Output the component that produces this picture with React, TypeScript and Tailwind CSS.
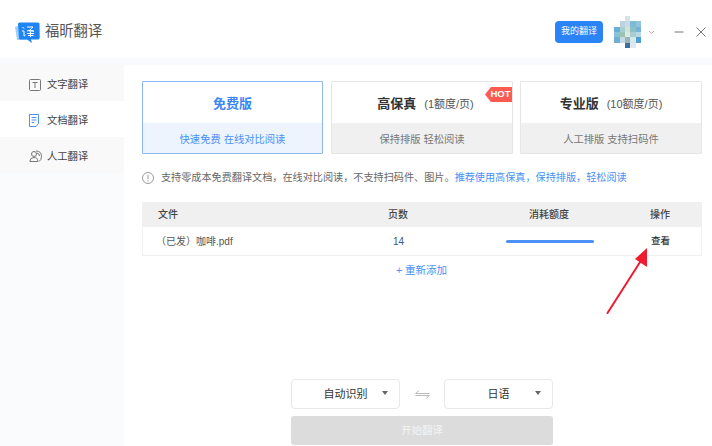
import React from 'react';

const FONT = "font-['Liberation_Sans','Noto_Sans_CJK_SC',sans-serif]";

// Mosaic avatar cells: [x, y, colour]
const avatarCells: [number, number, string][] = [
  [2, 0, '#d5e3ea'], [1, 1, '#bcd3df'], [2, 1, '#c9dbe2'], [3, 1, '#7fb9d8'], [4, 1, '#8fc4dc'],
  [0, 2, '#66b0d8'], [1, 2, '#a8cfc9'], [2, 2, '#cfe3dc'], [3, 2, '#8fbfc4'], [4, 2, '#74b4d8'],
  [0, 3, '#8cc0d8'], [1, 3, '#9cc4b4'], [2, 3, '#dfe8e0'], [3, 3, '#a7cdd0'], [4, 3, '#b8d8e8'],
  [0, 4, '#72b0d2'], [1, 4, '#c4dbe4'], [2, 4, '#9ab4bc'], [3, 4, '#d8e8f0'], [4, 4, '#4f9fd0'],
  [2, 5, '#3f6f9c'], [3, 5, '#dfe8f0'],
];

function Logo() {
  return (
    <svg width="28" height="28" viewBox="0 0 28 28" className="shrink-0">
      <path d="M0 9 L12 5 L24 5 L25 20 L8 22 L2 22 Z" fill="#9fd0fb" />
      <path d="M3 6 Q3 4.500 4.500 4.500 L23 4.500 Q24.500 4.500 24.500 6 L24.500 20 Q24.500 21.500 23 21.500 L16 21.500 L17 25 L12 21.500 L5.500 21.500 Q4 21.500 4 20 Z" fill="#1f84f5" />
      <path d="M7.500 9 L9 10.500 M7 13 L9 13 L9 18 L10.500 17 M12 9 L18 9 L14 13 L19 13 M12 13 Q15 11 19 13.500 M12 15.500 L19 15.500 M15.500 13.500 L15.500 19 M13 17.500 L18.500 17.500" stroke="#fff" strokeWidth="1" fill="none" />
    </svg>
  );
}

function TextIcon() {
  return (
    <svg width="12" height="12" viewBox="0 0 12 12" fill="none" stroke="#777" strokeWidth="1">
      <rect x="0.500" y="0.500" width="11" height="11" rx="1" />
      <path d="M3.500 3.500 H8.500 M6 3.500 V9" />
    </svg>
  );
}

function DocIcon() {
  return (
    <svg width="10" height="13" viewBox="0 0 10 13" fill="none" stroke="#4a90f5" strokeWidth="1">
      <path d="M0.500 0.500 H9.500 V9.500 L7 12.500 H0.500 Z" />
      <path d="M2.500 3.500 H7.500 M2.500 6 H7.500 M2.500 8.500 H5" />
    </svg>
  );
}

function PersonIcon() {
  return (
    <svg width="13" height="13" viewBox="0 0 13 13" fill="none" stroke="#777" strokeWidth="1">
      <circle cx="5" cy="4" r="2.500" />
      <path d="M0.800 11.500 Q1 7.500 5 7.500 Q9 7.500 8.800 11.500 Z" />
      <path d="M7 1 Q12.500 1 12.500 6.500 Q12.500 10 10 11.500 M8 3 Q10.500 3.500 10.500 6" />
    </svg>
  );
}

function NavItem({ icon, label, active }: { icon: React.ReactNode; label: string; active?: boolean }) {
  return (
    <div className={`h-9 flex items-center pl-[29px] pt-[3px] ${active ? 'bg-white' : 'bg-[#f9f9f9]'}`}>
      <span className="w-[18px] flex items-center">{icon}</span>
      <span className="text-[10.3px] text-[#444]">{label}</span>
    </div>
  );
}

function PlanCard({ title, rate, sub, active, hot, className }: { title: string; rate?: string; sub: string; active?: boolean; hot?: boolean; className: string }) {
  return (
    <div className={`relative h-[73px] flex flex-col border rounded-[1px] ${active ? 'border-[#8db8f5]' : 'border-[#e6e6e6]'} ${className}`}>
      <div className={`flex-1 flex items-center justify-center gap-[8px] pt-[3px] ${hot ? 'pl-[7px]' : ''}`}>
        <span className={`text-[13px] font-bold ${active ? 'text-[#3b86f5]' : 'text-[#333]'}`}>{title}</span>
        {rate && <span className="text-[11px] text-[#555]">{rate}</span>}
      </div>
      <div className={`h-[30px] flex items-center justify-center pt-[3px] text-[10.3px] ${active ? 'bg-[#edf4fe] text-[#4a90f5]' : 'bg-[#f0f0f0] text-[#777]'}`}>
        {sub}
      </div>
      {hot && (
        <div className="absolute right-0 top-[5px] h-[15px] w-[27px] bg-[#ff5a52] flex items-center justify-center text-[9.5px] font-bold text-white [clip-path:polygon(22%_0,100%_0,100%_100%,22%_100%,0_50%)] pl-[4px]">
          HOT
        </div>
      )}
    </div>
  );
}

function LangSelect({ label }: { label: string }) {
  return (
    <div className="w-[109px] h-[30px] bg-white border border-[#e8e8e8] rounded-[4px] flex items-center justify-center relative">
      <span className="text-[11px] text-[#333]">{label}</span>
      <svg width="6" height="4" viewBox="0 0 6 4" className="absolute right-[11px] top-[11px]">
        <path d="M0 0 H6 L3 4 Z" fill="#666" />
      </svg>
    </div>
  );
}

export default function App() {
  return (
    <div className={`relative w-[712px] h-[446px] overflow-hidden bg-white flex flex-col ${FONT}`}>
      {/* title bar */}
      <div className="h-[58px] shrink-0 flex items-center bg-white pl-[15px] pt-[6px]">
        <Logo />
        <span className="ml-[2px] text-[14.3px] text-[#555]">福昕翻译</span>
        <div className="ml-auto flex items-center pr-[6px]">
          <div className="w-[48px] h-[22px] bg-[#2b84f5] rounded-[4px] flex items-center justify-center text-[9px] text-white">我的翻译</div>
          <svg width="27" height="32" viewBox="0 0 5 6" className="ml-[11px]" shapeRendering="crispEdges">
            {avatarCells.map(([x, y, c]) => (
              <rect key={`${x}-${y}`} x={x} y={y} width="1" height="1" fill={c} />
            ))}
          </svg>
          <svg width="7" height="5" viewBox="0 0 7 5" fill="none" stroke="#aaa" className="ml-[7px]">
            <path d="M1 1 L3.500 3.500 L6 1" />
          </svg>
          <svg width="10" height="10" viewBox="0 0 10 10" fill="none" stroke="#777" className="ml-[19px]">
            <path d="M0.500 5 H9.500" />
          </svg>
          <svg width="10" height="10" viewBox="0 0 10 10" fill="none" stroke="#777" className="ml-[12px]">
            <path d="M0.500 0.500 L9.500 9.500 M9.500 0.500 L0.500 9.500" />
          </svg>
        </div>
      </div>
      <div className="h-[7px] shrink-0 bg-[#f9fafd]" />

      <div className="flex-1 flex min-h-0">
        {/* sidebar */}
        <div className="w-[124px] shrink-0 bg-[#fafbfd] flex flex-col">
          <NavItem icon={<TextIcon />} label="文字翻译" />
          <NavItem icon={<DocIcon />} label="文档翻译" active />
          <NavItem icon={<PersonIcon />} label="人工翻译" />
        </div>

        {/* main */}
        <div className="flex-1 flex flex-col pl-[18px] pr-[10px] pt-[16px]">
          <div className="flex">
            <PlanCard title="免费版" sub="快速免费 在线对比阅读" active className="w-[181px]" />
            <PlanCard title="高保真" rate="(1额度/页)" sub="保持排版 轻松阅读" hot className="w-[182px] ml-[8px]" />
            <PlanCard title="专业版" rate="(10额度/页)" sub="人工排版 支持扫码件" className="w-[182px] ml-[7px]" />
          </div>

          <div className="mt-[16px] h-[16px] flex items-center text-[10.15px] text-[#666] whitespace-nowrap">
            <svg width="12" height="12" viewBox="0 0 12 12" fill="none" stroke="#999" className="mr-[7px] shrink-0">
              <circle cx="6" cy="6" r="5.500" />
              <path d="M6 2.800 V7.200 M6 8.200 V9.400" />
            </svg>
            <span>支持零成本免费翻译文档，在线对比阅读，不支持扫码件、图片。</span>
            <span className="text-[#4a90f5]">推荐使用高保真，保持排版，轻松阅读</span>
          </div>

          {/* file table */}
          <div className="mt-[16px] border-b border-x border-[#f0f0f0]">
            <div className="h-[25px] bg-[#f0f0f0] -mx-px flex items-center text-[10px] font-medium text-[#444]">
              <span className="w-[242px] pl-[16px]">文件</span>
              <span className="w-[120px] pl-[4px]">页数</span>
              <span className="w-[122px] pl-[25px]">消耗额度</span>
              <span className="pl-[24px]">操作</span>
            </div>
            <div className="h-[28px] flex items-center text-[10px] text-[#555]">
              <span className="w-[241px] pl-[13px]">（已发）咖啡.pdf</span>
              <span className="w-[120px] pl-[9px] text-[#3d5a80]">14</span>
              <span className="w-[122px] pl-[2px]">
                <span className="block w-[88px] h-[3px] rounded-full bg-[#4a90f5]" />
              </span>
              <span className="pl-[25px] text-[9.5px] text-[#333] font-medium">查看</span>
            </div>
          </div>

          <div className="mt-[7px] text-center text-[10.5px] text-[#4a90f5] pr-[1px]">+ 重新添加</div>

          {/* language + start */}
          <div className="mt-auto w-[262px] mx-auto pb-px">
            <div className="flex items-center justify-between">
              <LangSelect label="自动识别" />
              <svg width="15" height="9" viewBox="0 0 15 9" fill="none" stroke="#b8b8b8">
                <path d="M14.500 3.500 H0.500 L4 0.500 M0.500 5.500 H14.500 L11 8.500" />
              </svg>
              <LangSelect label="日语" />
            </div>
            <div className="mt-[7px] h-[29px] bg-[#dcdcdc] rounded-[3px] flex items-center justify-center text-[10.5px] text-[#f4f4f4]">开始翻译</div>
          </div>
        </div>
      </div>

      {/* red annotation arrow */}
      <svg width="50" height="72" viewBox="0 0 50 72" className="absolute left-[602px] top-[244px]">
        <path d="M5.500 69 L40 15" stroke="#ee1c2e" strokeWidth="2" strokeLinecap="round" />
        <path d="M45 4 L45 23 L33 15 Z" fill="#ee1c2e" />
      </svg>
    </div>
  );
}
